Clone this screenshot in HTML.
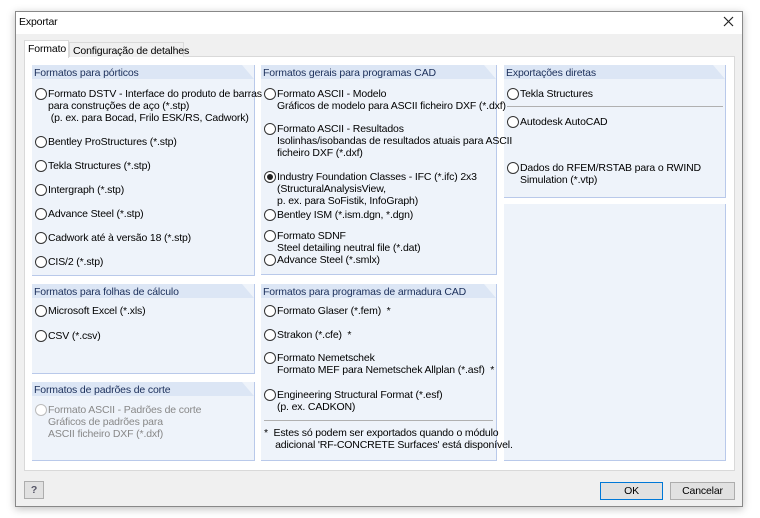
<!DOCTYPE html>
<html><head><meta charset="utf-8"><style>
*{margin:0;padding:0;box-sizing:border-box}
body{width:760px;height:518px;background:#fff;font-family:"Liberation Sans",sans-serif;font-size:10.5px;color:#000;position:relative;overflow:hidden;letter-spacing:-0.15px}
.win{position:absolute;left:15px;top:11px;width:728px;height:496px;background:#f0f0f0;border:1px solid #888;box-shadow:0 2px 8px rgba(0,0,0,.25)}
.a{position:absolute;white-space:nowrap;line-height:12px}
.p{position:absolute;background:#eef3fa;border-right:1px solid #b9c9ea;border-bottom:1px solid #b9c9ea}
.h{position:absolute;left:0;top:0;right:0;height:14px;background:#dce6f5;color:#1b2f5a;padding-left:2px;padding-top:2px;line-height:12px;clip-path:polygon(0 0,calc(100% - 12px) 0,100% 100%,0 100%)}
.r{position:absolute;width:12px;height:12px;border:1px solid #333;border-radius:50%;background:#fff}
.r.on::after{content:"";position:absolute;left:2px;top:2px;width:6px;height:6px;border-radius:50%;background:#222}
.r.dis{border-color:#bbb}
.btn{position:absolute;border:1px solid #adadad;background:#e1e1e1;text-align:center;line-height:17px}
</style></head><body>
<div class="win"></div>
<div class="title" style="position:absolute;left:16px;top:12px;width:726px;height:22px;background:#fff"></div>
<div class="a" style="left:19px;top:16px">Exportar</div>
<svg style="position:absolute;left:723px;top:16px" width="11" height="11"><path d="M1 1L10 10M10 1L1 10" stroke="#222" stroke-width="1.2"/></svg>
<div style="position:absolute;left:24px;top:56px;width:711px;height:415px;background:#fff;border:1px solid #d9d9d9"></div>
<div style="position:absolute;left:24px;top:40px;width:45px;height:18px;background:#fff;border:1px solid #d9d9d9;border-bottom:none"></div>
<div class="a" style="left:28px;top:43px">Formato</div>
<div style="position:absolute;left:69px;top:42px;width:115px;height:15px;background:#f0f0f0;border:1px solid #d9d9d9;border-bottom:none"></div>
<div class="a" style="left:73px;top:45px">Configuração de detalhes</div>

<div class="p" style="left:32px;top:65px;width:223px;height:211px"><div class="h">Formatos para pórticos</div></div>
<div class="p" style="left:32px;top:284px;width:223px;height:90px"><div class="h">Formatos para folhas de cálculo</div></div>
<div class="p" style="left:32px;top:382px;width:223px;height:79px"><div class="h">Formatos de padrões de corte</div></div>
<div class="p" style="left:261px;top:65px;width:236px;height:210px"><div class="h">Formatos gerais para programas CAD</div></div>
<div class="p" style="left:261px;top:284px;width:236px;height:177px"><div class="h">Formatos para programas de armadura CAD</div></div>
<div class="p" style="left:504px;top:65px;width:222px;height:133px"><div class="h">Exportações diretas</div></div>
<div class="p" style="left:504px;top:204px;width:222px;height:257px"></div>

<div class="r" style="left:35px;top:88px"></div><div class="a" style="left:48px;top:88px">Formato DSTV - Interface do produto de barras<br>para construções de aço (*.stp)<br>&nbsp;(p. ex. para Bocad, Frilo ESK/RS, Cadwork)</div>
<div class="r" style="left:35px;top:136px"></div><div class="a" style="left:48px;top:136px">Bentley ProStructures (*.stp)</div>
<div class="r" style="left:35px;top:160px"></div><div class="a" style="left:48px;top:160px">Tekla Structures (*.stp)</div>
<div class="r" style="left:35px;top:184px"></div><div class="a" style="left:48px;top:184px">Intergraph (*.stp)</div>
<div class="r" style="left:35px;top:208px"></div><div class="a" style="left:48px;top:208px">Advance Steel (*.stp)</div>
<div class="r" style="left:35px;top:232px"></div><div class="a" style="left:48px;top:232px">Cadwork até à versão 18 (*.stp)</div>
<div class="r" style="left:35px;top:256px"></div><div class="a" style="left:48px;top:256px">CIS/2 (*.stp)</div>
<div class="r" style="left:35px;top:305px"></div><div class="a" style="left:48px;top:305px">Microsoft Excel (*.xls)</div>
<div class="r" style="left:35px;top:330px"></div><div class="a" style="left:48px;top:330px">CSV (*.csv)</div>
<div class="r dis" style="left:35px;top:404px"></div><div class="a" style="left:48px;top:404px;color:#888">Formato ASCII - Padrões de corte<br>Gráficos de padrões para<br>ASCII ficheiro DXF (*.dxf)</div>

<div class="r" style="left:264px;top:88px"></div><div class="a" style="left:277px;top:88px">Formato ASCII - Modelo<br>Gráficos de modelo para ASCII ficheiro DXF (*.dxf)</div>
<div class="r" style="left:264px;top:123px"></div><div class="a" style="left:277px;top:123px">Formato ASCII - Resultados<br>Isolinhas/isobandas de resultados atuais para ASCII<br>ficheiro DXF (*.dxf)</div>
<div class="r on" style="left:264px;top:171px"></div><div class="a" style="left:277px;top:171px">Industry Foundation Classes - IFC (*.ifc) 2x3<br>(StructuralAnalysisView,<br>p. ex. para SoFistik, InfoGraph)</div>
<div class="r" style="left:264px;top:209px"></div><div class="a" style="left:277px;top:209px">Bentley ISM (*.ism.dgn, *.dgn)</div>
<div class="r" style="left:264px;top:230px"></div><div class="a" style="left:277px;top:230px">Formato SDNF<br>Steel detailing neutral file (*.dat)</div>
<div class="r" style="left:264px;top:254px"></div><div class="a" style="left:277px;top:254px">Advance Steel (*.smlx)</div>
<div class="r" style="left:264px;top:305px"></div><div class="a" style="left:277px;top:305px">Formato Glaser (*.fem) &nbsp;*</div>
<div class="r" style="left:264px;top:329px"></div><div class="a" style="left:277px;top:329px">Strakon (*.cfe) &nbsp;*</div>
<div class="r" style="left:264px;top:352px"></div><div class="a" style="left:277px;top:352px">Formato Nemetschek<br>Formato MEF para Nemetschek Allplan (*.asf) &nbsp;*</div>
<div class="r" style="left:264px;top:389px"></div><div class="a" style="left:277px;top:389px">Engineering Structural Format (*.esf)<br>(p. ex. CADKON)</div>
<div style="position:absolute;left:264px;top:420px;width:229px;height:1px;background:#b0b0b0"></div>
<div class="a" style="left:264px;top:427px">*&nbsp; Estes só podem ser exportados quando o módulo<br>&nbsp;&nbsp;&nbsp; adicional 'RF-CONCRETE Surfaces' está disponível.</div>

<div class="r" style="left:507px;top:88px"></div><div class="a" style="left:520px;top:88px">Tekla Structures</div>
<div style="position:absolute;left:507px;top:106px;width:216px;height:1px;background:#b0b0b0"></div>
<div class="r" style="left:507px;top:116px"></div><div class="a" style="left:520px;top:116px">Autodesk AutoCAD</div>
<div class="r" style="left:507px;top:162px"></div><div class="a" style="left:520px;top:162px">Dados do RFEM/RSTAB para o RWIND<br>Simulation (*.vtp)</div>

<div class="btn" style="left:24px;top:481px;width:20px;height:18px;line-height:16px;font-weight:bold;color:#556">?</div>
<div class="btn" style="left:600px;top:482px;width:63px;height:18px;border:1px solid #0078d7">OK</div>
<div class="btn" style="left:670px;top:482px;width:65px;height:18px">Cancelar</div>
</body></html>
